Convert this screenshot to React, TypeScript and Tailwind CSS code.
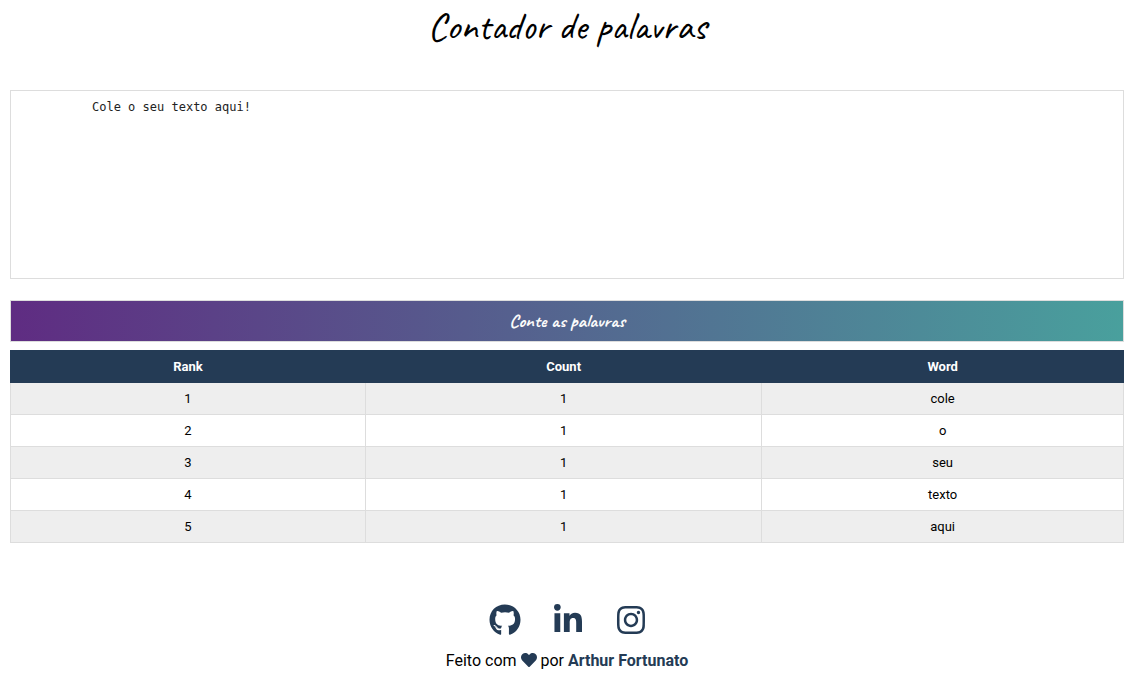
import { useState } from "react";
import { FaGithub, FaHeart, FaInstagram, FaLinkedinIn } from "react-icons/fa";

type WordCount = { word: string; count: number };

function countWords(text: string): WordCount[] {
  const counts = new Map<string, number>();
  for (const word of text.toLowerCase().match(/[\p{L}\p{N}]+/gu) ?? []) {
    counts.set(word, (counts.get(word) ?? 0) + 1);
  }
  return Array.from(counts, ([word, count]) => ({ word, count })).sort(
    (a, b) => b.count - a.count,
  );
}

const links = [
  { name: "GitHub", href: "#github", Icon: FaGithub },
  { name: "LinkedIn", href: "#linkedin", Icon: FaLinkedinIn },
  { name: "Instagram", href: "#instagram", Icon: FaInstagram },
];

export default function App() {
  const [text, setText] = useState("Cole o seu texto aqui!");
  const [rows, setRows] = useState(() => countWords(text));

  return (
    <div className="bg-white pr-[7px] pl-[10px] font-[Roboto,sans-serif] text-black">
      <h1 className="pt-[3px] text-center font-[Caveat,cursive] text-[39px] leading-12 font-medium">
        Contador de palavras
      </h1>

      <main className="pt-[39px]">
        <textarea
          aria-label="Texto"
          value={text}
          onChange={(event) => setText(event.target.value)}
          className="block h-[189px] w-full resize-none border border-[#dddddd] bg-white py-2 pr-5 pl-[81px] font-['DejaVu_Sans_Mono',monospace] text-[12px] leading-4 text-[#222222] outline-none"
        />
        <button
          type="button"
          onClick={() => setRows(countWords(text))}
          className="mt-[21px] block h-[42px] w-full border border-[#dddddd] bg-linear-to-r/srgb from-[#5f2c82] to-[#49a09d] bg-origin-border text-center font-[Caveat,cursive] text-[19px] font-bold text-[#fafafa]"
        >
          Conte as palavras
        </button>

        <table className="mt-2 w-full table-fixed border-collapse text-center text-[13px] leading-4">
          <thead>
            <tr className="h-8 bg-[#243b55] text-white">
              <th className="w-[31.9%] border border-[#243b55] font-bold">Rank</th>
              <th className="w-[35.6%] border border-[#243b55] font-bold">Count</th>
              <th className="w-[32.5%] border border-[#243b55] font-bold">Word</th>
            </tr>
          </thead>
          <tbody>
            {rows.map(({ word, count }, index) => (
              <tr key={word} className="h-8 odd:bg-[#eeeeee]">
                <td className="border border-[#dddddd]">{index + 1}</td>
                <td className="border border-[#dddddd]">{count}</td>
                <td className="border border-[#dddddd]">{word}</td>
              </tr>
            ))}
          </tbody>
        </table>
      </main>

      <footer className="pt-[61px] text-center">
        <nav className="flex justify-center gap-[31px] pl-[2px] text-[#243b55]">
          {links.map(({ name, href, Icon }) => (
            <a key={name} href={href} aria-label={name}>
              <Icon className="h-8 w-auto" />
            </a>
          ))}
        </nav>
        <p className="pt-[13px] text-[16px] leading-6">
          Feito com <FaHeart className="inline size-4 align-[-2px] text-[#243b55]" /> por{" "}
          <a href="#autor" className="font-bold text-[#243b55]">
            Arthur Fortunato
          </a>
        </p>
      </footer>
    </div>
  );
}
